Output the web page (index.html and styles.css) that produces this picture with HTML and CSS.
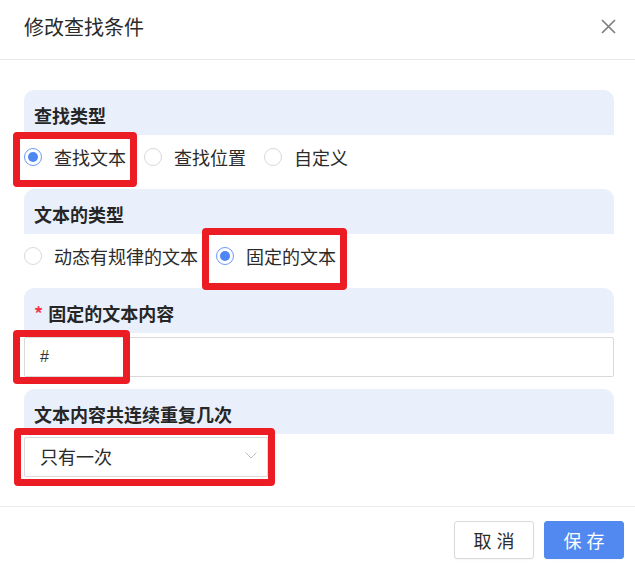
FILE: index.html
```html
<!DOCTYPE html>
<html lang="zh-CN">
<head>
<meta charset="utf-8">
<title>修改查找条件</title>
<link rel="stylesheet" href="styles.css">
</head>
<body>
<div class="dialog">
  <div class="dlg-header">
    <span class="title">修改查找条件</span>
    <svg class="close" width="15" height="15" viewBox="0 0 15 15"><path d="M1 1L14 14M14 1L1 14" stroke="#7f7f7f" stroke-width="1.7" fill="none"/></svg>
  </div>
  <div class="dlg-body">
    <div class="section">
      <div class="sec-head">查找类型</div>
      <div class="radio-row">
        <span class="radio checked"><span class="circle"></span><span>查找文本</span></span>
        <span class="radio"><span class="circle"></span><span>查找位置</span></span>
        <span class="radio"><span class="circle"></span><span>自定义</span></span>
      </div>
    </div>
    <div class="section">
      <div class="sec-head">文本的类型</div>
      <div class="radio-row">
        <span class="radio"><span class="circle"></span><span>动态有规律的文本</span></span>
        <span class="radio checked"><span class="circle"></span><span>固定的文本</span></span>
      </div>
    </div>
    <div class="section">
      <div class="sec-head"><span class="req">*</span>固定的文本内容</div>
      <div class="field input">#</div>
    </div>
    <div class="section last">
      <div class="sec-head">文本内容共连续重复几次</div>
      <div class="field select">
        <span>只有一次</span>
        <svg class="chev" width="12" height="7" viewBox="0 0 12 7"><path d="M0.5 0.5L6 6L11.5 0.5" stroke="#bfbfbf" stroke-width="1" fill="none"/></svg>
      </div>
    </div>
  </div>
  <div class="dlg-footer">
    <button class="btn">取消</button>
    <button class="btn primary">保存</button>
  </div>
  <div class="mark m1"></div>
  <div class="mark m2"></div>
  <div class="mark m3"></div>
  <div class="mark m4"></div>
</div>
</body>
</html>
```
FILE: styles.css
```css
* { box-sizing: border-box; }
html, body { margin: 0; padding: 0; background: #fff; }
body {
  font-family: "Noto Sans CJK SC", "Noto Sans", sans-serif;
  color: #333;
  width: 635px;
  height: 570px;
  overflow: hidden;
}
.dialog { position: relative; width: 635px; height: 570px; }

.dlg-header {
  height: 60px;
  padding: 13px 19px 0 24px;
  border-bottom: 1px solid #e9e9e9;
  display: flex;
  justify-content: space-between;
  align-items: flex-start;
}
.title { font-size: 20px; line-height: 28px; color: #2b2b2b; }
.close { margin-top: 6px; }

.dlg-body { padding: 30px 21px 29px 24px; }

.sec-head {
  background: #e9f0fc;
  border-radius: 10px 10px 0 0;
  padding: 15px 10px 10px;
  font-size: 18px;
  line-height: 20px;
  font-weight: bold;
  color: #262626;
}
.req { color: #f5384a; margin-right: 5px; font-weight: bold; }

.radio-row {
  height: 54px;
  padding-top: 12px;
  display: flex;
  align-items: flex-start;
}
.radio {
  display: inline-flex;
  align-items: center;
  font-size: 18px;
  line-height: 20px;
  color: #2b2b2b;
  margin-right: 18px;
}
.circle {
  width: 18px;
  height: 18px;
  border: 1px solid #d9d9d9;
  border-radius: 50%;
  margin-right: 12px;
  display: inline-flex;
  align-items: center;
  justify-content: center;
  background: #fff;
}
.radio.checked .circle { border-color: #6a9bf7; }
.radio.checked .circle::after {
  content: "";
  width: 10px;
  height: 10px;
  border-radius: 50%;
  background: #4f87f2;
}

.field {
  height: 40px;
  border: 1px solid #d9d9d9;
  border-radius: 2px;
  background: #fff;
  display: flex;
  align-items: center;
  padding: 0 10px 0 15px;
}
.input {
  margin-top: 4px;
  margin-bottom: 12px;
  font-family: "Liberation Sans", sans-serif;
  font-size: 16px;
  color: #333;
}
.select {
  margin-top: 3px;
  width: 244px;
  justify-content: space-between;
  font-size: 18px;
  line-height: 20px;
  padding-bottom: 3px;
  color: #2b2b2b;
}

.dlg-footer {
  border-top: 1px solid #e9e9e9;
  padding: 14px 11px 0 0;
  display: flex;
  justify-content: flex-end;
  gap: 10px;
}
.btn {
  width: 80px;
  height: 38px;
  border: 1px solid #d9d9d9;
  border-radius: 3px;
  background: #fff;
  color: #2b2b2b;
  font-family: "Noto Sans CJK SC", sans-serif;
  font-size: 18px;
  letter-spacing: 5px;
  text-indent: 5px;
  padding: 0;
  box-shadow: 0 1px 2px rgba(0,0,0,0.04);
}
.btn.primary { background: #5289f1; border-color: #5289f1; color: #fff; }

.mark {
  position: absolute;
  border: 7px solid #ec1c24;
  border-radius: 4px;
}
.m1 { left: 13px; top: 132px; width: 124px; height: 55px; }
.m2 { left: 202px; top: 228px; width: 145px; height: 62px; }
.m3 { left: 13px; top: 330px; width: 117px; height: 54px; }
.m4 { left: 14px; top: 428px; width: 261px; height: 58px; }
```
